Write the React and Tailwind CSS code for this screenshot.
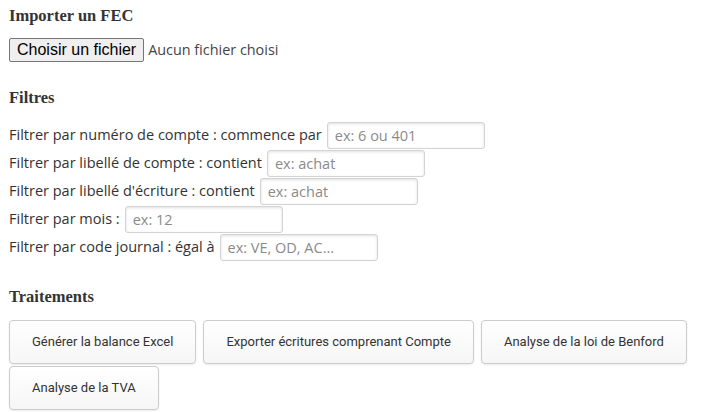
import React from "react";

const filters = [
  { label: "Filtrer par numéro de compte : commence par", ph: "ex: 6 ou 401" },
  { label: "Filtrer par libellé de compte : contient", ph: "ex: achat" },
  { label: "Filtrer par libellé d'écriture : contient", ph: "ex: achat" },
  { label: "Filtrer par mois :", ph: "ex: 12" },
  { label: "Filtrer par code journal : égal à", ph: "ex: VE, OD, AC..." },
];

const buttons = [
  "Générer la balance Excel",
  "Exporter écritures comprenant Compte",
  "Analyse de la loi de Benford",
  "Analyse de la TVA",
];

function Heading({ children, className = "" }) {
  return (
    <h3
      className={`text-[16.5px] leading-[20px] font-bold text-[#333] ${className}`}
      style={{ fontFamily: '"Liberation Serif", "DejaVu Serif", serif' }}
    >
      {children}
    </h3>
  );
}

export default function App() {
  return (
    <div
      className="w-[708px] h-[412px] bg-white px-[9px] pt-[6px] text-[#333] overflow-hidden"
      style={{ fontFamily: '"Open Sans", sans-serif' }}
    >
      <Heading>Importer un FEC</Heading>
      <div className="mt-[12px] flex items-center h-[24px]">
        <button
          className="h-[24px] px-[7px] border border-[#767676] rounded-[2px] bg-[#efefef] text-[16px] text-black leading-none"
          style={{ fontFamily: '"Liberation Sans", Arial, sans-serif' }}
        >
          Choisir un fichier
        </button>
        <span className="ml-[4px] text-[14.4px] text-[#444]">Aucun fichier choisi</span>
      </div>

      <Heading className="mt-[26px]">Filtres</Heading>
      <div className="mt-[13px] flex flex-col">
        {filters.map((f) => (
          <div key={f.label} className="flex items-center h-[28px]">
            <span className="text-[14.5px] text-[#333] whitespace-nowrap">{f.label}</span>
            <input
              placeholder={f.ph}
              className="ml-[5px] w-[158px] h-[27px] px-[7px] border border-[#d3d3d3] rounded-[3px] bg-white text-[14.5px] placeholder:text-[#8a8a8a] shadow-[inset_0_1px_3px_rgba(0,0,0,0.12)] outline-none"
              style={{ fontFamily: '"Open Sans", sans-serif' }}
            />
          </div>
        ))}
      </div>

      <Heading className="mt-[26px]">Traitements</Heading>
      <div className="mt-[13px] flex flex-wrap gap-x-[7px] gap-y-[2px] w-[690px]">
        {buttons.map((b) => (
          <button
            key={b}
            className="h-[44px] px-[22px] border border-[#ccc] rounded-[4px] bg-gradient-to-b from-white to-[#f6f6f6] shadow-[0_1px_2px_rgba(0,0,0,0.08)] text-[13px] text-[#333] whitespace-nowrap"
            style={{ fontFamily: 'Roboto, sans-serif' }}
          >
            {b}
          </button>
        ))}
      </div>
    </div>
  );
}
